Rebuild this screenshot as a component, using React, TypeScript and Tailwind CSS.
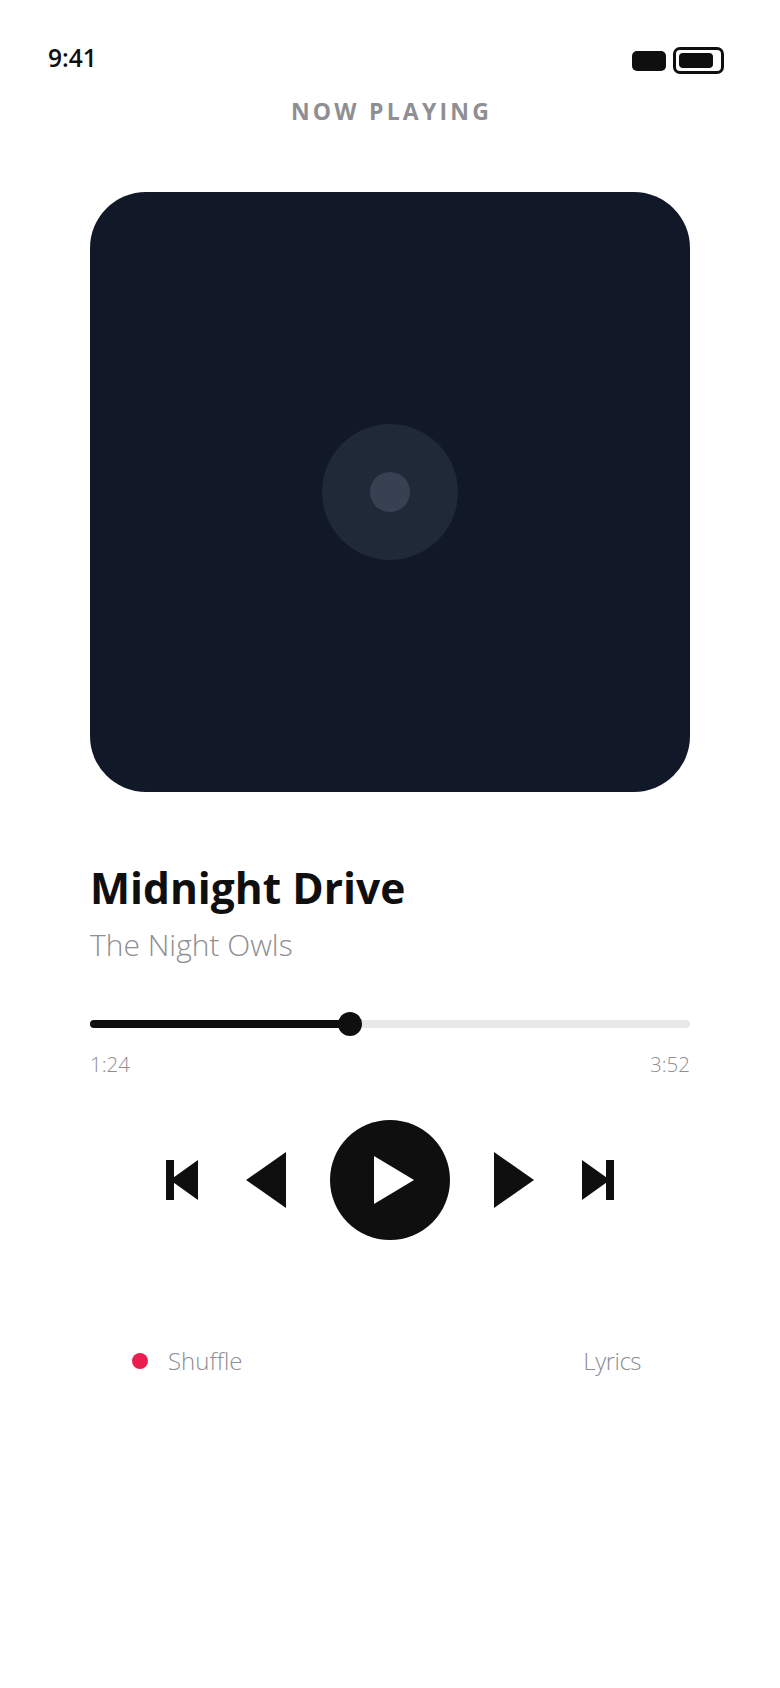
import React from "react";

const ink = "#0f0f0f";

const App: React.FC = () => {
  return (
    <div className="w-[780px] h-[1688px] bg-white text-[#0f0f0f] font-['Open_Sans',sans-serif] overflow-hidden">
      {/* Status bar */}
      <div className="flex items-center justify-between pl-[48px] pr-[56px] pt-[46px] h-[74px]">
        <span className="text-[24.5px] font-semibold leading-[28px] mt-[-4px]">9:41</span>
        <div className="flex items-center gap-[7px]">
          <div className="w-[34px] h-[20px] rounded-[5px] bg-[#0f0f0f] mt-[2px]" />
          <div className="w-[51px] h-[27px] rounded-[7px] border-[3px] border-[#0f0f0f] p-[3px]">
            <div className="w-[34px] h-full rounded-[4px] bg-[#0f0f0f]" />
          </div>
        </div>
      </div>

      <p className="mt-[23px] pl-[3px] text-center text-[23px] leading-[28px] font-bold tracking-[3.2px] text-[#8e8e93]">
        NOW PLAYING
      </p>

      {/* Album art */}
      <div className="mx-[90px] mt-[67px] w-[600px] h-[600px] rounded-[56px] bg-[#111827] flex items-center justify-center">
        <div className="w-[136px] h-[136px] rounded-full bg-[#1f2937] flex items-center justify-center">
          <div className="w-[40px] h-[40px] rounded-full bg-[#374151]" />
        </div>
      </div>

      {/* Track info */}
      <div className="mx-[90px] mt-[66px]">
        <h1 className="text-[42.5px] leading-[60px] font-bold">Midnight Drive</h1>
        <p className="mt-[7px] text-[30px] leading-[40px] font-light text-[#8e8e93]">The Night Owls</p>
      </div>

      {/* Progress */}
      <div className="mx-[90px] mt-[55px]">
        <div className="relative h-[8px] rounded-full bg-[#e8e8e8]">
          <div className="h-full w-[260px] rounded-full bg-[#0f0f0f]" />
          <div className="absolute left-[248px] top-[-8px] w-[24px] h-[24px] rounded-full bg-[#0f0f0f]" />
        </div>
        <div className="mt-[22px] flex justify-between text-[20.5px] leading-[28px] font-light text-[#8e8e93]">
          <span>1:24</span>
          <span>3:52</span>
        </div>
      </div>

      {/* Transport controls */}
      <div className="mt-[42px] flex items-center justify-center gap-[44px]">
        <svg width="36" height="40" viewBox="0 0 36 40" fill={ink}>
          <rect x="0" y="0" width="8" height="40" />
          <polygon points="32,0 32,40 4,20" />
        </svg>
        <svg width="40" height="56" viewBox="0 0 40 56" fill={ink}>
          <polygon points="40,0 40,56 0,28" />
        </svg>
        <div className="w-[120px] h-[120px] rounded-full bg-[#0f0f0f] flex items-center justify-center">
          <svg width="40" height="48" viewBox="0 0 40 48" fill="#ffffff" className="ml-[8px]">
            <polygon points="0,0 40,24 0,48" />
          </svg>
        </div>
        <svg width="40" height="56" viewBox="0 0 40 56" fill={ink}>
          <polygon points="0,0 0,56 40,28" />
        </svg>
        <svg width="36" height="40" viewBox="0 0 36 40" fill={ink}>
          <polygon points="4,0 4,40 32,20" />
          <rect x="28" y="0" width="8" height="40" />
        </svg>
      </div>

      {/* Secondary actions */}
      <div className="mt-[105px] pl-[132px] pr-[139px] flex items-center justify-between text-[24px] leading-[32px] font-light text-[#8e8e93]">
        <div className="flex items-center gap-[20px]">
          <span className="w-[16px] h-[16px] rounded-full bg-[#e91e4f]" />
          <span>Shuffle</span>
        </div>
        <span className="tracking-[-0.5px]">Lyrics</span>
      </div>
    </div>
  );
};

export default App;
